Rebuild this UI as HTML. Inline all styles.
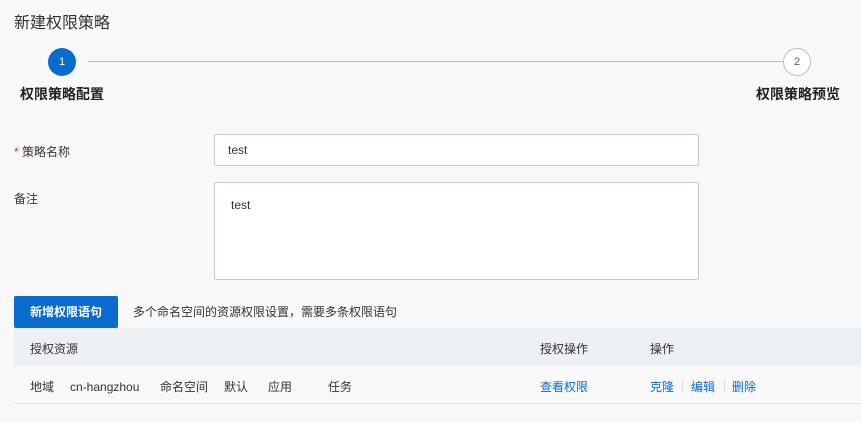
<!DOCTYPE html>
<html><head><meta charset="utf-8"><style>
*{margin:0;padding:0;box-sizing:border-box}
body{width:861px;height:422px;background:#f8f8f8;font-family:"Liberation Sans","Noto Sans CJK SC",sans-serif;font-size:12px;color:#333;position:relative;overflow:hidden}
.a{position:absolute;white-space:nowrap}
.c{position:absolute;border-radius:50%;text-align:center;font-size:11px}
.in{position:absolute;border:1px solid #c4c9d1;background:#fff;border-radius:2px}
.blue{color:#0a6bcf}
</style></head><body>
<div class="a" style="left:14px;top:9px;font-size:16px;color:#333">新建权限策略</div>
<div class="c" style="left:48px;top:48px;width:28px;height:28px;background:#0a6bcf;color:#fff;line-height:28px">1</div>
<div class="a" style="left:88px;top:61px;width:695px;height:1px;background:#b6bcc6"></div>
<div class="c" style="left:783px;top:48px;width:28px;height:28px;border:1px solid #b6bcc6;background:#fff;color:#666;line-height:26px">2</div>
<div class="a" style="left:20px;top:84px;font-size:14px;font-weight:bold;color:#222">权限策略配置</div>
<div class="a" style="left:756px;top:84px;font-size:14px;font-weight:bold;color:#222">权限策略预览</div>
<div class="a" style="left:14px;top:143px"><span style="color:#d93026">*</span> 策略名称</div>
<div class="in" style="left:214px;top:134px;width:485px;height:32px"><span class="a" style="left:13px;top:8px">test</span></div>
<div class="a" style="left:14px;top:190px">备注</div>
<div class="in" style="left:214px;top:182px;width:485px;height:98px"><span class="a" style="left:16px;top:15px">test</span></div>
<div class="a" style="left:14px;top:296px;width:104px;height:32px;background:#0a6bcf;color:#fff;font-weight:bold;text-align:center;line-height:32px;border-radius:2px">新增权限语句</div>
<div class="a" style="left:133px;top:303px">多个命名空间的资源权限设置，需要多条权限语句</div>
<div class="a" style="left:14px;top:328px;width:847px;height:38px;background:#eceff4"></div>
<div class="a" style="left:30px;top:340px">授权资源</div>
<div class="a" style="left:540px;top:340px">授权操作</div>
<div class="a" style="left:650px;top:340px">操作</div>
<div class="a" style="left:14px;top:403px;width:847px;height:1px;background:#e3e5e8"></div>
<div class="a" style="left:30px;top:378px">地域</div>
<div class="a" style="left:70px;top:380px">cn-hangzhou</div>
<div class="a" style="left:160px;top:378px">命名空间</div>
<div class="a" style="left:224px;top:378px">默认</div>
<div class="a" style="left:268px;top:378px">应用</div>
<div class="a" style="left:328px;top:378px">任务</div>
<div class="a blue" style="left:540px;top:378px">查看权限</div>
<div class="a blue" style="left:650px;top:378px">克隆</div>
<div class="a" style="left:682px;top:379px;width:1px;height:14px;background:#ddd"></div>
<div class="a blue" style="left:691px;top:378px">编辑</div>
<div class="a" style="left:724px;top:379px;width:1px;height:14px;background:#ddd"></div>
<div class="a blue" style="left:732px;top:378px">删除</div>
</body></html>
